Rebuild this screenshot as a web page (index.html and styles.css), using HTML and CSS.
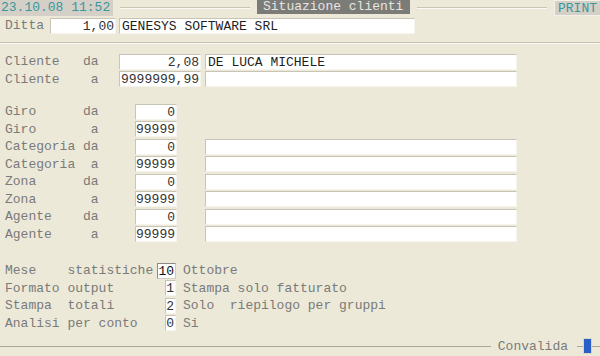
FILE: index.html
```html
<!DOCTYPE html>
<html>
<head>
<meta charset="utf-8">
<link rel="stylesheet" href="styles.css">
</head>
<body>
<div class="screen">
  <div class="header">
    <div class="date">23.10.08 11:52</div>
    <div class="rule"></div>
    <div class="title">Situazione clienti</div>
    <div class="rule"></div>
    <div class="print">PRINT</div>
  </div>

  <div class="row ditta">
    <span class="lbl lbl-ditta">Ditta</span>
    <span class="box num b-ditta">1,00</span>
    <span class="box txt b-name">GENESYS SOFTWARE SRL</span>
  </div>

  <div class="sep"></div>

  <div class="block cliente">
    <div class="row">
      <span class="lbl lbl-cli">Cliente   da</span>
      <span class="box num b-cli">2,08</span>
      <span class="box txt b-wide">DE LUCA MICHELE</span>
    </div>
    <div class="row">
      <span class="lbl lbl-cli">Cliente    a</span>
      <span class="box num b-cli">9999999,99</span>
      <span class="box txt b-wide"></span>
    </div>
  </div>

  <div class="block ranges">
    <div class="row">
      <span class="lbl lbl-rng">Giro      da</span>
      <span class="box num b-rng">0</span>
    </div>
    <div class="row">
      <span class="lbl lbl-rng">Giro       a</span>
      <span class="box num b-rng">99999</span>
    </div>
    <div class="row">
      <span class="lbl lbl-rng">Categoria da</span>
      <span class="box num b-rng">0</span>
      <span class="box txt b-wide"></span>
    </div>
    <div class="row">
      <span class="lbl lbl-rng">Categoria  a</span>
      <span class="box num b-rng">99999</span>
      <span class="box txt b-wide"></span>
    </div>
    <div class="row">
      <span class="lbl lbl-rng">Zona      da</span>
      <span class="box num b-rng">0</span>
      <span class="box txt b-wide"></span>
    </div>
    <div class="row">
      <span class="lbl lbl-rng">Zona       a</span>
      <span class="box num b-rng">99999</span>
      <span class="box txt b-wide"></span>
    </div>
    <div class="row">
      <span class="lbl lbl-rng">Agente    da</span>
      <span class="box num b-rng">0</span>
      <span class="box txt b-wide"></span>
    </div>
    <div class="row">
      <span class="lbl lbl-rng">Agente     a</span>
      <span class="box num b-rng">99999</span>
      <span class="box txt b-wide"></span>
    </div>
  </div>

  <div class="block options">
    <div class="row">
      <span class="opt-key"><span class="lbl">Mese    statistiche</span><span class="box num b-opt2">10</span></span>
      <span class="opt-val">Ottobre</span>
    </div>
    <div class="row">
      <span class="opt-key"><span class="lbl">Formato output</span><span class="box num b-opt1">1</span></span>
      <span class="opt-val">Stampa solo fatturato</span>
    </div>
    <div class="row">
      <span class="opt-key"><span class="lbl">Stampa  totali</span><span class="box num b-opt1">2</span></span>
      <span class="opt-val">Solo  riepilogo per gruppi</span>
    </div>
    <div class="row">
      <span class="opt-key"><span class="lbl">Analisi per conto</span><span class="box num b-opt1">0</span></span>
      <span class="opt-val">Si</span>
    </div>
  </div>

  <div class="footer">
    <div class="fline"></div>
    <div class="conv">Convalida</div>
    <div class="fline short"></div>
    <div class="btn"></div>
    <div class="fline tail"></div>
  </div>
</div>
</body>
</html>
```

FILE: styles.css
```css
html, body {
  margin: 0;
  padding: 0;
  background: #ece9d8;
}
.screen {
  width: 600px;
  height: 356px;
  position: relative;
  font-family: "Liberation Mono", "DejaVu Sans Mono", monospace;
  font-size: 13px;
  color: #7a7a7a;
  overflow: hidden;
}
.header {
  display: flex;
  align-items: center;
  height: 16px;
}
.date {
  width: 113px;
  height: 16px;
  line-height: 16px;
  background: #d4d0c8;
  color: #3a979b;
  padding-left: 1px;
  box-sizing: border-box;
  white-space: pre;
}
.rule {
  flex: 1;
  height: 0;
  border-top: 1px solid #c9c5b4;
  border-bottom: 1px solid #faf9f3;
  margin: 0 7px;
}
.title {
  width: 153px;
  height: 14px;
  line-height: 14px;
  background: #7b7b78;
  color: #e6e6e2;
  padding-left: 6px;
  box-sizing: border-box;
  margin-top: -2px;
  white-space: pre;
}
.print {
  width: 46px;
  height: 16px;
  line-height: 16px;
  background: #d4d0c8;
  color: #3a979b;
  text-align: center;
  border: 1px solid #f2f0e8;
  border-right: none;
  box-sizing: border-box;
}
.row {
  display: flex;
  align-items: center;
  height: 17.5px;
  padding-left: 5px;
  white-space: pre;
}
.ditta {
  margin-top: 1px;
  height: 17px;
}
.lbl {
  white-space: pre;
  color: #7a7a7a;
}
.lbl-ditta { width: 45px; }
.lbl-cli { width: 114px; }
.lbl-rng { width: 130px; }
.box {
  display: block;
  height: 16px;
  line-height: 15px;
  background: #ffffff;
  border-style: solid;
  border-width: 1px;
  border-color: #c8c4b6 #f6f4ec #f6f4ec #c8c4b6;
  box-sizing: border-box;
  color: #1e1e1e;
  white-space: pre;
  overflow: hidden;
}
.num {
  text-align: right;
  padding-right: 1px;
  color: #333333;
}
.txt {
  padding-left: 2px;
}
.b-ditta { width: 66px; }
.b-name { width: 296px; margin-left: 3px; }
.b-cli { width: 82px; }
.b-wide { width: 312px; margin-left: 4px; }
.b-rng { width: 42px; }
.b-rng + .b-wide { margin-left: 28px; }
.sep {
  margin-top: 8px;
  height: 0;
  border-top: 1px solid #c6c2b2;
  border-bottom: 1px solid #fbfaf4;
}
.cliente { margin-top: 9px; }
.ranges { margin-top: 15px; }
.options { margin-top: 19px; }
.opt-key {
  width: 171px;
  display: flex;
  justify-content: space-between;
  align-items: center;
}
.b-opt2 {
  width: 19px;
  padding-right: 1px;
  color: #111111;
  border-color: #8a8a8a #d0ccc0 #d0ccc0 #8a8a8a;
}
.b-opt1 {
  width: 11px;
  padding-right: 1px;
}
.opt-val {
  margin-left: 7px;
  color: #7a7a7a;
}
.footer {
  position: absolute;
  left: 0;
  right: 0;
  top: 338px;
  height: 16px;
  display: flex;
  align-items: center;
}
.fline {
  flex: 1;
  height: 0;
  border-top: 1px solid #a9a89f;
}
.fline.short {
  flex: none;
  width: 6px;
}
.fline.tail {
  flex: none;
  width: 8px;
}
.conv {
  padding: 0 9px 0 7px;
  color: #7a7a7a;
  white-space: pre;
}
.btn {
  width: 9px;
  height: 16px;
  background: #2a5fc8;
  border: 1px solid #d9d6c8;
  box-sizing: border-box;
}
```
